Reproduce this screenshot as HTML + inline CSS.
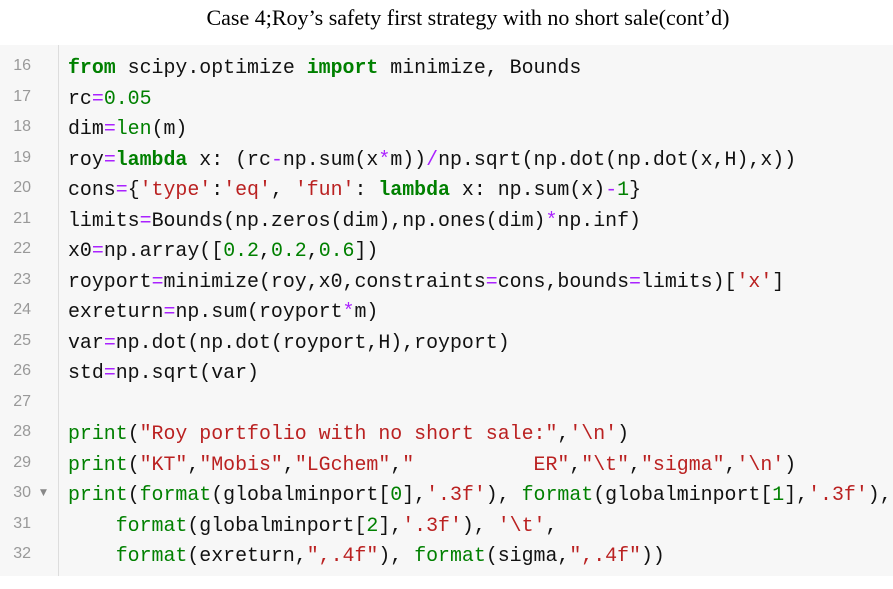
<!DOCTYPE html>
<html><head><meta charset="utf-8"><style>
html,body{margin:0;padding:0;background:#fff;width:893px;height:589px;overflow:hidden}
.t{position:absolute;left:0;width:936px;top:5px;text-align:center;font-family:"Liberation Serif",serif;font-size:22px;color:#000}
.box{position:absolute;left:0;top:45px;width:893px;height:531px;background:#f7f7f7}
.gut{position:absolute;left:0;top:0;width:58px;height:531px;border-right:1px solid #ddd}
.ln{position:absolute;left:0;width:31px;text-align:right;font-family:"Liberation Sans",sans-serif;font-size:16px;color:#999;height:30.5px;line-height:30.5px}
pre{position:absolute;left:68px;top:8px;margin:0;font-family:"Liberation Mono",monospace;font-size:19.9px;line-height:30.5px;color:#111}
.k{color:#008000;font-weight:bold}.b{color:#008000}.o{color:#aa22ff}.s{color:#ba2121}.n{color:#008000}
.arr{position:absolute;left:40px;top:433px;font-size:9px;color:#888;line-height:30.5px;font-family:"DejaVu Sans",sans-serif}
</style></head><body>
<div class="t">Case 4;Roy’s safety first strategy with no short sale(cont’d)</div>
<div class="box"><div class="gut"></div>
<div class="ln" style="top:6px">16</div><div class="ln" style="top:36.5px">17</div><div class="ln" style="top:67px">18</div><div class="ln" style="top:97.5px">19</div><div class="ln" style="top:128px">20</div><div class="ln" style="top:158.5px">21</div><div class="ln" style="top:189px">22</div><div class="ln" style="top:219.5px">23</div><div class="ln" style="top:250px">24</div><div class="ln" style="top:280.5px">25</div><div class="ln" style="top:311px">26</div><div class="ln" style="top:341.5px">27</div><div class="ln" style="top:372px">28</div><div class="ln" style="top:402.5px">29</div><div class="ln" style="top:433px">30</div><div class="ln" style="top:463.5px">31</div><div class="ln" style="top:494px">32</div>
<div class="arr">▼</div>
<pre><span class="k">from</span> scipy.optimize <span class="k">import</span> minimize, Bounds
rc<span class="o">=</span><span class="n">0.05</span>
dim<span class="o">=</span><span class="b">len</span>(m)
roy<span class="o">=</span><span class="k">lambda</span> x: (rc<span class="o">-</span>np.sum(x<span class="o">*</span>m))<span class="o">/</span>np.sqrt(np.dot(np.dot(x,H),x))
cons<span class="o">=</span>{<span class="s">'type'</span>:<span class="s">'eq'</span>, <span class="s">'fun'</span>: <span class="k">lambda</span> x: np.sum(x)<span class="o">-</span><span class="n">1</span>}
limits<span class="o">=</span>Bounds(np.zeros(dim),np.ones(dim)<span class="o">*</span>np.inf)
x0<span class="o">=</span>np.array([<span class="n">0.2</span>,<span class="n">0.2</span>,<span class="n">0.6</span>])
royport<span class="o">=</span>minimize(roy,x0,constraints<span class="o">=</span>cons,bounds<span class="o">=</span>limits)[<span class="s">'x'</span>]
exreturn<span class="o">=</span>np.sum(royport<span class="o">*</span>m)
var<span class="o">=</span>np.dot(np.dot(royport,H),royport)
std<span class="o">=</span>np.sqrt(var)

<span class="b">print</span>(<span class="s">"Roy portfolio with no short sale:"</span>,<span class="s">'\n'</span>)
<span class="b">print</span>(<span class="s">"KT"</span>,<span class="s">"Mobis"</span>,<span class="s">"LGchem"</span>,<span class="s">"          ER"</span>,<span class="s">"\t"</span>,<span class="s">"sigma"</span>,<span class="s">'\n'</span>)
<span class="b">print</span>(<span class="b">format</span>(globalminport[<span class="n">0</span>],<span class="s">'.3f'</span>), <span class="b">format</span>(globalminport[<span class="n">1</span>],<span class="s">'.3f'</span>),
    <span class="b">format</span>(globalminport[<span class="n">2</span>],<span class="s">'.3f'</span>), <span class="s">'\t'</span>,
    <span class="b">format</span>(exreturn,<span class="s">",.4f"</span>), <span class="b">format</span>(sigma,<span class="s">",.4f"</span>))</pre>
</div>
</body></html>
